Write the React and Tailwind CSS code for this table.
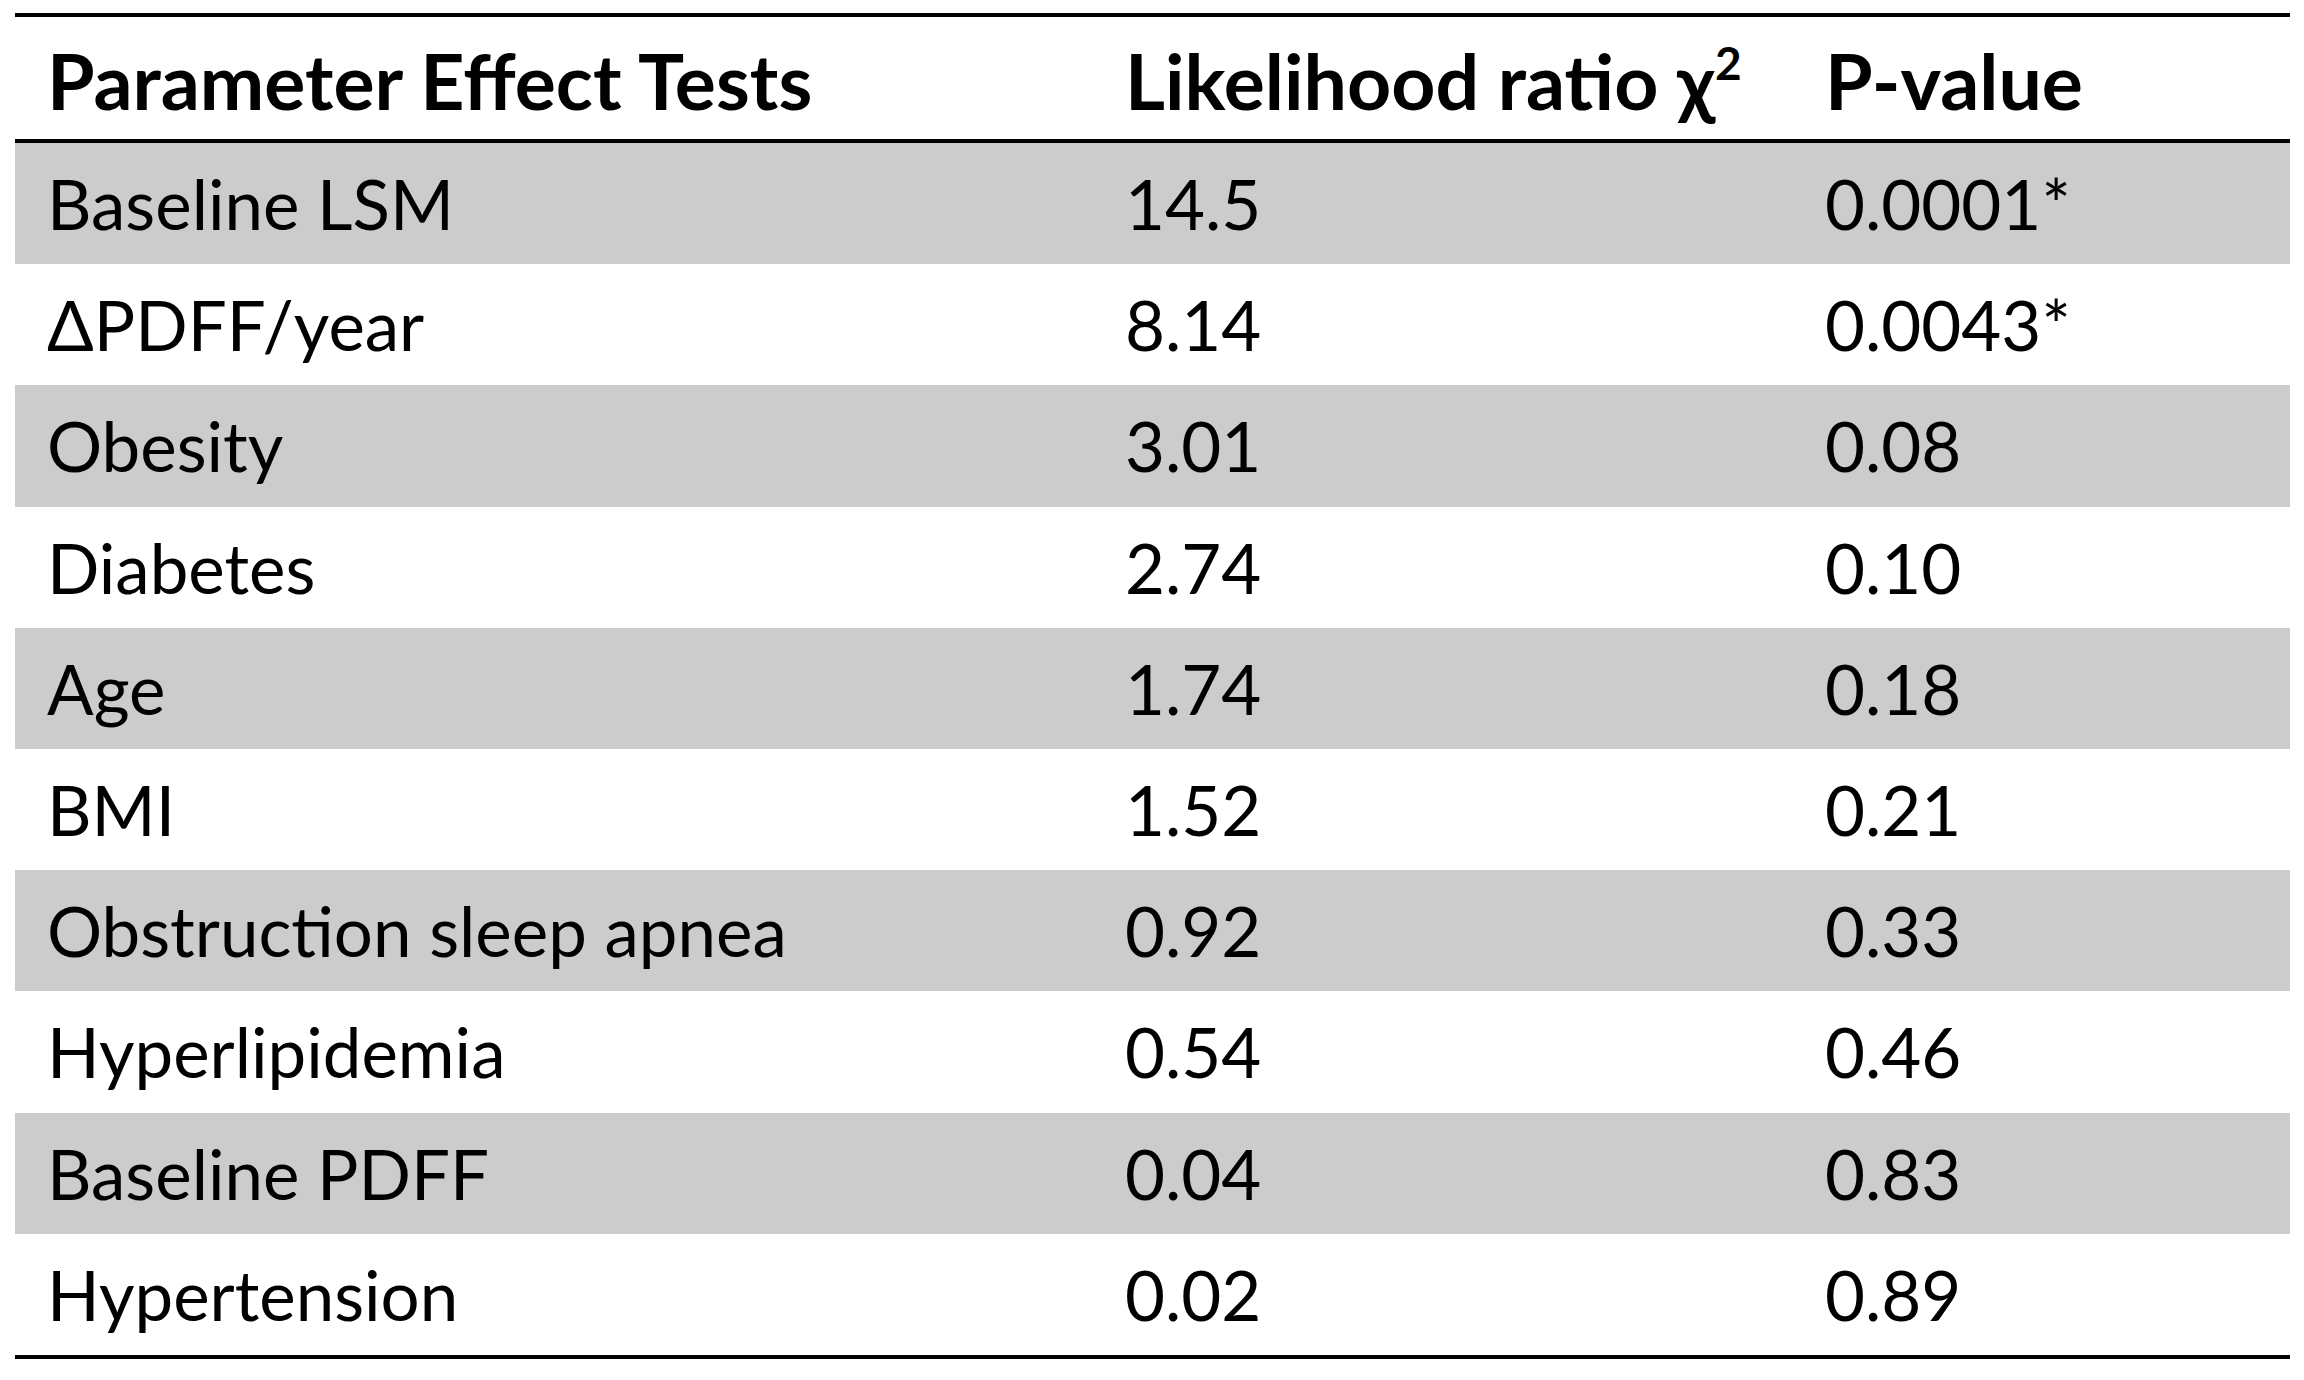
const rows = [
  ["Baseline LSM", "14.5", "0.0001*"],
  ["ΔPDFF/year", "8.14", "0.0043*"],
  ["Obesity", "3.01", "0.08"],
  ["Diabetes", "2.74", "0.10"],
  ["Age", "1.74", "0.18"],
  ["BMI", "1.52", "0.21"],
  ["Obstruction sleep apnea", "0.92", "0.33"],
  ["Hyperlipidemia", "0.54", "0.46"],
  ["Baseline PDFF", "0.04", "0.83"],
  ["Hypertension", "0.02", "0.89"],
];

export default function App() {
  return (
    <div
      className="w-[2304px] h-[1380px] bg-white text-black pt-[13px] px-[15px]"
      style={{ fontFamily: "Lato, 'Open Sans', sans-serif" }}
    >
      <div className="w-[2275px] border-t-4 border-b-4 border-black">
        {/* header */}
        <div className="grid grid-cols-[1078px_700px_1fr] h-[126px] items-center border-b-4 border-black text-[77px] font-bold leading-none">
          <div className="pl-[32px] pt-[4px]">Parameter Effect Tests</div>
          <div className="pl-[32px] pt-[4px]">
            Likelihood ratio χ
            <sup className="text-[46px] relative -top-[30px]">2</sup>
          </div>
          <div className="pl-[32px] pt-[4px]">P-value</div>
        </div>

        {rows.map((r, i) => (
          <div
            key={i}
            className={`grid grid-cols-[1078px_700px_1fr] h-[121.2px] items-center text-[69px] leading-none ${i % 2 === 0 ? "bg-[#cccccc]" : "bg-white"}`}
          >
            <div className="pl-[32px]">{r[0]}</div>
            <div className="pl-[32px]">{r[1]}</div>
            <div className="pl-[32px]">{r[2]}</div>
          </div>
        ))}
      </div>
    </div>
  );
}
